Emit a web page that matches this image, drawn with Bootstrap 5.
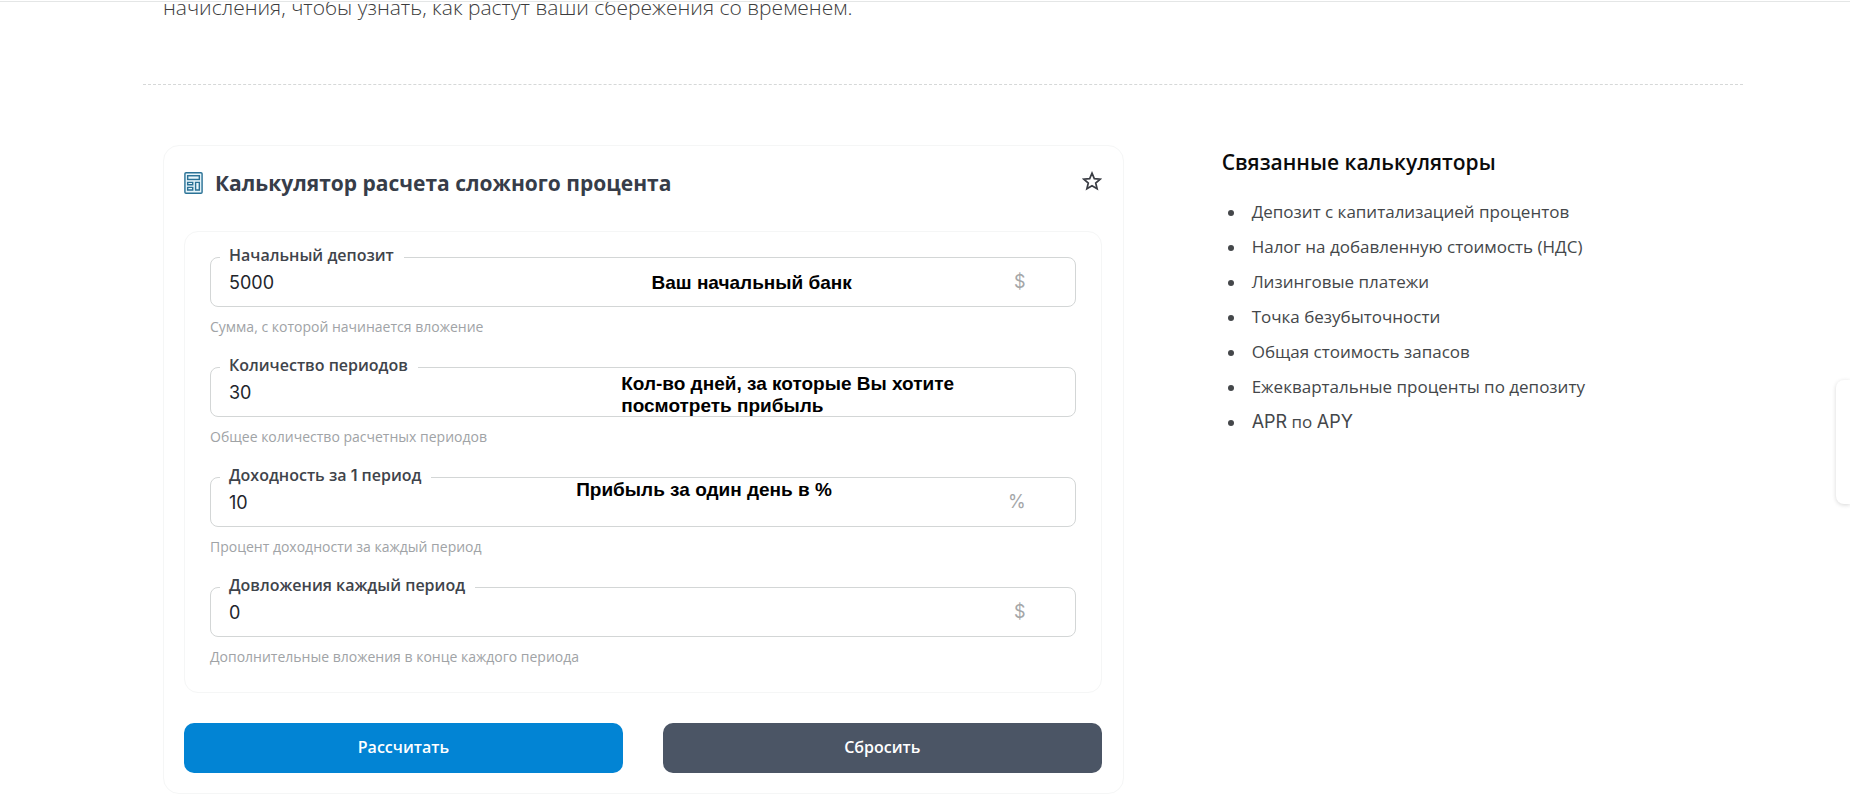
<!DOCTYPE html>
<html lang="ru">
<head>
<meta charset="utf-8">
<meta name="viewport" content="width=device-width, initial-scale=1">
<title>Калькулятор расчета сложного процента</title>
<link href="https://cdn.jsdelivr.net/npm/bootstrap@5.3.0/dist/css/bootstrap.min.css" rel="stylesheet">
<style>
  body { font-family: "Open Sans", "Noto Sans", sans-serif; color: #3f4246; background: #fff; padding-left: 36px; overflow-x: hidden; }
  .latin { font-family: Inter, sans-serif; }
  .topline { height: 2px; border-bottom: 1px solid #e4e6e6; background: #fff; z-index: 5; }
  .page { max-width: 1600px; }
  .intro { height: 84px; }
  .intro p { font-size: 21px; line-height: 32px; font-weight: 300; color: #3c3c3c; margin: 0 0 0 20px; position: relative; top: -9px; }
  .divider { border-top: 1px dashed #d6d8d8; margin-bottom: 60px; }
  .calc-col { padding-left: 20px; padding-right: 86px; }
  .calc { border: 1px solid #f5f6f6; border-radius: 16px; padding: 19px 21px 20px 20px; }
  .calc-head { height: 36px; margin-bottom: 30px; }
  .calc-title { font-size: 21px; line-height: 28px; font-weight: 700; color: #373d49; }
  .star { line-height: 0; color: #3a3d44; }
  .fields { border: 1px solid #f5f6f6; border-radius: 14px; padding: 25px 25px 23px; }
  .field { margin-bottom: 28px; }
  .field-box { height: 50px; }
  .field-box .form-control { height: 50px; border: 1px solid #d3d6d6; border-radius: 8px; padding: 0 72px 0 18px; font: 400 18px/24px Inter, sans-serif; color: #22252b; background: none; }
  .field-label { left: 10px; top: -14px; padding: 0 10px 0 9px; font-size: 16px; line-height: 24px; font-weight: 600; color: #3f444b; background: #fff; }
  .unit { right: 50px; top: 13px; font-size: 18px; line-height: 24px; color: #a4a6a8; }
  .hint { font-size: 14px; line-height: 20px; padding-top: 10px; height: 32px; color: #a0a3a6; }
  .remark { font: 700 19px/22px "Liberation Sans", Arial, sans-serif; color: #000; pointer-events: none; }
  .remark-bank { left: 51%; top: 15px; }
  .remark-days { left: 47.5%; top: 6px; width: 352px; }
  .remark-rate { left: 42.3%; top: 2px; }
  .actions { gap: 40px; margin-top: 30px; }
  .actions .btn { height: 50px; border-radius: 10px; font-size: 16px; line-height: 24px; font-weight: 600; color: #fff; border: 0; padding: 0 12px 2px; }
  .btn-run { background: #0284d4; }
  .btn-clear { background: #4b5565; }
  .related h2 { font-size: 21px; line-height: 30px; font-weight: 600; color: #0b0b0b; margin: 2px 0 17px; }
  .related ul { padding-left: 30px; list-style: none; }
  .related li { font-size: 17px; line-height: 35px; }
  .related li::before { content: ""; display: inline-block; width: 6px; height: 6px; border-radius: 50%; background: #44474a; margin: 0 18px 2px -24px; }
  .related a { color: #44474a; }
  .related .latin { font-size: 18px; line-height: 24px; }
  .side-tab { right: 0; top: 380px; width: 14px; height: 124px; background: #fff; border-radius: 8px 0 0 8px; box-shadow: 0 1px 4px rgba(0,0,0,.16); }
</style>
</head>
<body>
<div class="topline fixed-top"></div>
<main class="page mx-auto">
  <div class="intro"><p>начисления, чтобы узнать, как растут ваши сбережения со временем.</p></div>
  <div class="divider"></div>
  <div class="row gx-4 mx-0">
    <section class="col-8 calc-col">
      <form class="calc">
        <div class="calc-head d-flex align-items-center">
          <svg width="19" height="22" viewBox="0 0 17 20" fill="#e9f6fb" stroke="#2b7296" stroke-width="1.3" aria-hidden="true"><rect x=".7" y=".7" width="15.6" height="18.6" rx="1"/><rect x="3.2" y="3.4" width="10.6" height="3.4"/><path d="M3.2 9.4h4.6v2.2H3.2zM3.2 14h4.6v2.4H3.2zM10.4 9.4h3.4v7h-3.4z"/></svg>
          <h1 class="calc-title mb-0 ms-2 ps-1">Калькулятор расчета сложного процента</h1>
          <button type="button" class="star btn p-0 border-0 ms-auto mb-1" aria-label="В избранное"><svg width="20" height="20" viewBox="0 0 20 20" fill="none" stroke="currentColor" stroke-width="1.7" stroke-linejoin="miter"><path d="M10 2.2l2.3 5.4 5.9.5-4.5 3.9 1.4 5.8-5.1-3.1-5.1 3.1 1.4-5.8-4.5-3.9 5.9-.5z"/></svg></button>
        </div>
        <div class="fields">
          <div class="field">
            <div class="field-box position-relative">
              <input class="form-control" id="deposit" type="text" inputmode="numeric" value="5000" aria-describedby="deposit-hint">
              <label class="field-label position-absolute" for="deposit">Начальный депозит</label>
              <span class="unit latin position-absolute">$</span>
              <span class="remark remark-bank position-absolute">Ваш начальный банк</span>
            </div>
            <div class="hint" id="deposit-hint">Сумма, с которой начинается вложение</div>
          </div>
          <div class="field">
            <div class="field-box position-relative">
              <input class="form-control" id="periods" type="text" inputmode="numeric" value="30" aria-describedby="periods-hint">
              <label class="field-label position-absolute" for="periods">Количество периодов</label>
              <span class="remark remark-days position-absolute">Кол-во дней, за которые Вы хотите посмотреть прибыль</span>
            </div>
            <div class="hint" id="periods-hint">Общее количество расчетных периодов</div>
          </div>
          <div class="field">
            <div class="field-box position-relative">
              <input class="form-control" id="rate" type="text" inputmode="numeric" value="10" aria-describedby="rate-hint">
              <label class="field-label position-absolute" for="rate">Доходность за <span class="latin">1</span> период</label>
              <span class="unit latin position-absolute">%</span>
              <span class="remark remark-rate position-absolute">Прибыль за один день в %</span>
            </div>
            <div class="hint" id="rate-hint">Процент доходности за каждый период</div>
          </div>
          <div class="field mb-0">
            <div class="field-box position-relative">
              <input class="form-control" id="extra" type="text" inputmode="numeric" value="0" aria-describedby="extra-hint">
              <label class="field-label position-absolute" for="extra">Довложения каждый период</label>
              <span class="unit latin position-absolute">$</span>
            </div>
            <div class="hint" id="extra-hint">Дополнительные вложения в конце каждого периода</div>
          </div>
        </div>
        <div class="actions d-flex">
          <button type="button" class="btn btn-run flex-fill w-50">Рассчитать</button>
          <button type="reset" class="btn btn-clear flex-fill w-50">Сбросить</button>
        </div>
      </form>
    </section>
    <aside class="col-4 related">
      <h2>Связанные калькуляторы</h2>
      <ul class="mb-0">
        <li><a href="#" class="text-decoration-none">Депозит с капитализацией процентов</a></li>
        <li><a href="#" class="text-decoration-none">Налог на добавленную стоимость (НДС)</a></li>
        <li><a href="#" class="text-decoration-none">Лизинговые платежи</a></li>
        <li><a href="#" class="text-decoration-none">Точка безубыточности</a></li>
        <li><a href="#" class="text-decoration-none">Общая стоимость запасов</a></li>
        <li><a href="#" class="text-decoration-none">Ежеквартальные проценты по депозиту</a></li>
        <li><a href="#" class="text-decoration-none"><span class="latin">APR</span> по <span class="latin">APY</span></a></li>
      </ul>
    </aside>
  </div>
</main>
<div class="side-tab position-fixed"></div>
<script src="https://cdn.jsdelivr.net/npm/bootstrap@5.3.0/dist/js/bootstrap.bundle.min.js"></script>
</body>
</html>
